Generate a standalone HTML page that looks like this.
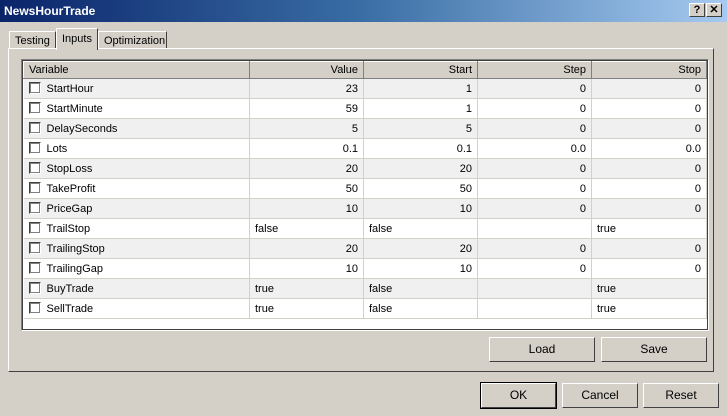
<!DOCTYPE html>
<html><head><style>
*{margin:0;padding:0;box-sizing:border-box}
body{width:727px;height:416px;background:#d4d0c8;font-family:"Liberation Sans",sans-serif;font-size:11px;position:relative;overflow:hidden;color:#000}
.title{position:absolute;left:0;top:0;width:727px;height:22px;background:linear-gradient(to right,#0a246a,#3a6ea5 50%,#a6caf0);color:#fff;font-weight:bold;font-size:12px;padding:4px 0 0 4px}
.tb{position:absolute;top:3px;width:16px;height:14px;background:#d4d0c8;border:1px solid;border-color:#fff #404040 #404040 #fff;color:#000;font-size:11px;font-weight:bold;text-align:center;line-height:12px}
.tab{position:absolute;height:18px;border:1px solid;border-color:#fff #404040 transparent #fff;padding:3px 0 0 5px;font-size:11px}
.panel{position:absolute;left:8px;top:48px;width:706px;height:324px;border:1px solid;border-color:#fff #404040 #404040 #fff}
.grid{position:absolute;left:21px;top:59px;width:688px;height:272px;border:1px solid;border-color:#808080 #fff #fff #808080;background:#fff;outline:1px solid #404040;outline-offset:-2px}
table{position:absolute;left:23px;top:61px;border-collapse:collapse;width:684px}
td,th{height:20px;border-right:1px solid #d4d0c8;border-bottom:1px solid #d4d0c8;padding:0 5px;font-weight:normal;white-space:nowrap}
th{height:17px;background:#d4d0c8;border:1px solid;border-color:#fff #808080 #808080 #fff;text-align:right}
th:first-child{text-align:left}
tr:nth-child(even) td{background:#f0f0f0}
td.n{text-align:right}
.cb{display:inline-block;width:12px;height:12px;border:1px solid;border-color:#404040 #fff #fff #404040;outline:1px solid #808080;outline-offset:-2px;background:#fff;vertical-align:-2px;margin:0 6px 0 0}
.btn{position:absolute;height:25px;border:1px solid;border-color:#fff #404040 #404040 #fff;text-align:center;line-height:23px;font-size:12px;background:#d4d0c8}
</style></head><body>
<div class="title">NewsHourTrade</div>
<div class="tb" style="left:689px">?</div>
<div class="tb" style="left:706px">✕</div>
<div class="tab" style="left:9px;top:31px;width:47px">Testing</div>
<div class="tab" style="left:98px;top:31px;width:69px">Optimization</div>
<div class="panel"></div>
<div class="tab" style="left:56px;top:28px;width:42px;height:22px;background:#d4d0c8;border-bottom:none;padding-top:4px">Inputs</div>
<div class="grid"></div>
<table>
<tr><th style="width:226px">Variable</th><th style="width:114px">Value</th><th style="width:114px">Start</th><th style="width:114px">Step</th><th>Stop</th></tr>
<tr><td><span class="cb"></span>StartHour</td><td class="n">23</td><td class="n">1</td><td class="n">0</td><td class="n">0</td></tr>
<tr><td><span class="cb"></span>StartMinute</td><td class="n">59</td><td class="n">1</td><td class="n">0</td><td class="n">0</td></tr>
<tr><td><span class="cb"></span>DelaySeconds</td><td class="n">5</td><td class="n">5</td><td class="n">0</td><td class="n">0</td></tr>
<tr><td><span class="cb"></span>Lots</td><td class="n">0.1</td><td class="n">0.1</td><td class="n">0.0</td><td class="n">0.0</td></tr>
<tr><td><span class="cb"></span>StopLoss</td><td class="n">20</td><td class="n">20</td><td class="n">0</td><td class="n">0</td></tr>
<tr><td><span class="cb"></span>TakeProfit</td><td class="n">50</td><td class="n">50</td><td class="n">0</td><td class="n">0</td></tr>
<tr><td><span class="cb"></span>PriceGap</td><td class="n">10</td><td class="n">10</td><td class="n">0</td><td class="n">0</td></tr>
<tr><td><span class="cb"></span>TrailStop</td><td>false</td><td>false</td><td></td><td>true</td></tr>
<tr><td><span class="cb"></span>TrailingStop</td><td class="n">20</td><td class="n">20</td><td class="n">0</td><td class="n">0</td></tr>
<tr><td><span class="cb"></span>TrailingGap</td><td class="n">10</td><td class="n">10</td><td class="n">0</td><td class="n">0</td></tr>
<tr><td><span class="cb"></span>BuyTrade</td><td>true</td><td>false</td><td></td><td>true</td></tr>
<tr><td><span class="cb"></span>SellTrade</td><td>true</td><td>false</td><td></td><td>true</td></tr>
</table>
<div class="btn" style="left:489px;top:337px;width:106px">Load</div>
<div class="btn" style="left:601px;top:337px;width:106px">Save</div>
<div class="btn" style="left:481px;top:383px;width:75px;outline:1px solid #000">OK</div>
<div class="btn" style="left:562px;top:383px;width:76px">Cancel</div>
<div class="btn" style="left:643px;top:383px;width:76px">Reset</div>
</body></html>
